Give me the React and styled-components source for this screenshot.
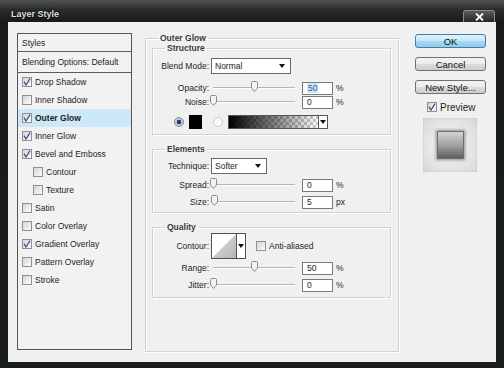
import React from "react";
import styled, { createGlobalStyle } from "styled-components";

const Global = createGlobalStyle`
  html, body {
    margin: 0;
    background: #1b201f;
  }
  body {
    font-family: "Liberation Sans", Arial, sans-serif;
    color: #1e1e1e;
  }
`;

const Window = styled.div`
  width: 504px;
  height: 368px;
  display: flex;
  flex-direction: column;
  background: linear-gradient(#4f5352 0, #2b2e2d 9px, #171a19 22px, #1a1f1e 100%);
`;

const TitleBar = styled.div`
  height: 22px;
  display: flex;
  align-items: flex-end;
  justify-content: space-between;
  padding: 0 9px 0 11px;
  flex-shrink: 0;
`;

const Title = styled.div`
  font-size: 9px;
  font-weight: bold;
  line-height: 14px;
  padding-bottom: 1px;
  color: #dcdcdc;
  text-shadow: 0 0 3px #000;
`;

const CloseBtn = styled.div`
  width: 32px;
  height: 12px;
  box-sizing: border-box;
  border: 1px solid #8c8c8c;
  border-bottom: none;
  border-radius: 3px 3px 0 0;
  background: linear-gradient(#5a5a5a, #262626);
  display: flex;
  align-items: center;
  justify-content: center;
`;

const Body = styled.div`
  margin: 0 8px;
  height: 340px;
  box-sizing: border-box;
  background: #f0f0f0;
  display: flex;
  align-items: flex-start;
  padding: 11px 0 0 9px;
`;

/* left style list */

const StyleList = styled.div`
  width: 115px;
  height: 317px;
  box-sizing: border-box;
  border: 1px solid #555;
  background: #f2f2f2;
  display: flex;
  flex-direction: column;
  flex-shrink: 0;
`;

const ListHead = styled.div`
  height: ${({ $h }) => $h}px;
  box-sizing: border-box;
  border-bottom: 1px solid #5c5c5c;
  display: flex;
  align-items: center;
  padding-left: 4px;
  font-size: 8.5px;
`;

const ListItem = styled.div`
  height: 18px;
  display: flex;
  align-items: center;
  padding-left: ${({ $sub }) => ($sub ? 15 : 4)}px;
  font-size: 8.5px;
  font-weight: ${({ $active }) => ($active ? "bold" : "normal")};
  background: ${({ $active }) => ($active ? "#cde8f6" : "transparent")};
`;

const Box = styled.span`
  width: 10px;
  height: 10px;
  box-sizing: border-box;
  border: 1px solid #8f9090;
  background: linear-gradient(135deg, #d6d6d6, #fbfbfb);
  display: inline-flex;
  align-items: center;
  justify-content: center;
  flex-shrink: 0;
  margin-right: 3px;
`;

const Check = ({ on }) => (
  <Box>
    {on && (
      <svg width="8" height="8" viewBox="0 0 8 8">
        <path d="M1 3.6 L3 7 L7 0.6" fill="none" stroke="#3f4588" strokeWidth="1.2" />
      </svg>
    )}
  </Box>
);

/* middle settings */

const Group = styled.fieldset`
  margin: 0;
  min-width: 0;
  box-sizing: border-box;
  border: 1px solid #d2d2d2;
  box-shadow: inset 1px 1px 0 #fff, 1px 1px 0 #fff;
  display: flex;
  flex-direction: column;
  padding: ${({ $pad }) => $pad};
`;

const Panel = styled(Group)`
  margin-left: 13px;
  width: 254px;
  height: 319px;
  gap: 9px;
  flex-shrink: 0;
`;

const Legend = styled.legend`
  margin-left: ${({ $indent }) => $indent}px;
  padding: 0 2px;
  font-size: 8.5px;
  line-height: 10px;
  font-weight: bold;
  color: #3b3b3b;
`;

const Row = styled.div`
  display: flex;
  align-items: center;
  height: ${({ $h }) => $h}px;
  margin-top: ${({ $mt }) => $mt}px;
  padding-left: ${({ $pl }) => $pl || 0}px;
  font-size: 8.5px;
`;

const Label = styled.span`
  width: 56px;
  text-align: right;
  flex-shrink: 0;
`;

const Select = styled.div`
  margin-left: 2px;
  width: ${({ $w }) => $w}px;
  height: 16px;
  box-sizing: border-box;
  border: 1px solid #6a6a6a;
  background: #fff;
  display: flex;
  align-items: center;
  justify-content: space-between;
  padding: 0 5px 0 3px;
`;

const Caret = styled.span`
  width: 0;
  height: 0;
  border-left: 3px solid transparent;
  border-right: 3px solid transparent;
  border-top: 4px solid #111;
`;

const Track = styled.div`
  position: relative;
  margin-left: 4px;
  width: 82px;
  height: 1px;
  background: #b5b5b5;
  border-bottom: 1px solid #fff;
`;

const ThumbWrap = styled.span`
  position: absolute;
  top: -6px;
  width: 7px;
  height: 11px;
  margin-left: -3.5px;
`;

const Slider = ({ value, max = 100 }) => (
  <Track>
    <ThumbWrap style={{ left: `${(value / max) * 100}%` }}>
      <svg width="7" height="11" viewBox="0 0 7 11">
        <path d="M0.5 1.5 Q0.5 0.5 1.5 0.5 H5.5 Q6.5 0.5 6.5 1.5 V7 L3.5 10.5 L0.5 7 Z" fill="#f3f3f3" stroke="#8c8c8c" />
      </svg>
    </ThumbWrap>
  </Track>
);

const NumBox = styled.div`
  margin-left: 7px;
  width: 31px;
  height: 13px;
  box-sizing: border-box;
  border: 1px solid #7a7a7a;
  background: #fff;
  display: flex;
  align-items: center;
  padding-left: 4px;
`;

const Selected = styled.span`
  background: #cfe4f7;
  color: #1f5ea8;
  padding: 0 1px;
`;

const Unit = styled.span`
  margin-left: 3px;
`;

const Radio = styled.span`
  width: 10px;
  height: 10px;
  box-sizing: border-box;
  border-radius: 50%;
  border: 1px solid ${({ $on }) => ($on ? "#7e8a99" : "#c8ccd2")};
  background: ${({ $on }) =>
    $on ? "radial-gradient(circle, #2c3b66 0 2px, #b9c2d0 2.5px, #eef0f3 100%)" : "#fbfbfb"};
  margin-left: ${({ $ml }) => $ml}px;
  flex-shrink: 0;
`;

const Swatch = styled.span`
  margin-left: 5px;
  width: 13px;
  height: 14px;
  background: #000;
`;

const GradientBar = styled.div`
  margin-left: 5px;
  width: 100px;
  height: 14px;
  box-sizing: border-box;
  border: 1px solid #555;
  display: flex;
`;

const GradientFill = styled.span`
  flex: 1;
  background: linear-gradient(to right, #000, rgba(0, 0, 0, 0)),
    repeating-conic-gradient(#c9c9c9 0 25%, #fff 0 50%) 0 0 / 6px 6px;
`;

const DropPart = styled.span`
  width: 8px;
  border-left: 1px solid #555;
  background: #fff;
  display: flex;
  align-items: center;
  justify-content: center;
`;

const ContourPick = styled.div`
  margin-left: 2px;
  width: 35px;
  height: 26px;
  box-sizing: border-box;
  border: 1px solid #505050;
  background: #fff;
  display: flex;
`;

const ContourArt = styled.span`
  flex: 1;
  display: flex;
`;

const AntiAlias = styled.span`
  margin-left: 10px;
  display: flex;
  align-items: center;
`;

/* right actions */

const Actions = styled.div`
  margin-left: 16px;
  margin-top: 1px;
  width: 71px;
  display: flex;
  flex-direction: column;
  flex-shrink: 0;
`;

const Button = styled.div`
  height: 14px;
  margin-top: ${({ $mt }) => $mt || 0}px;
  box-sizing: border-box;
  border: 1px solid ${({ $primary }) => ($primary ? "#3c7fb1" : "#707070")};
  border-radius: 3px;
  background: ${({ $primary }) =>
    $primary
      ? "linear-gradient(#e3f3fc 0%, #c6e6f7 50%, #a9d9f2 51%, #8fcaea 100%)"
      : "linear-gradient(#f3f3f3 0%, #ebebeb 50%, #dcdcdc 51%, #cdcdcd 100%)"};
  display: flex;
  align-items: center;
  justify-content: center;
  font-size: 9.5px;
  color: #111;
`;

const PreviewRow = styled.div`
  margin-top: 8px;
  height: 10px;
  padding-left: 12px;
  display: flex;
  align-items: center;
  font-size: 10px;
`;

const PreviewBox = styled.div`
  margin: 6px 0 0 8px;
  width: 54px;
  height: 54px;
  background: radial-gradient(circle, #ececec 40%, #d7d7d7 100%);
  box-shadow: inset 0 0 2px rgba(0, 0, 0, 0.15);
  display: flex;
  align-items: center;
  justify-content: center;
`;

const PreviewSquare = styled.span`
  width: 27px;
  height: 28px;
  box-sizing: border-box;
  border: 1px solid #6d6d6d;
  background: linear-gradient(#d4d4d4, #9c9c9c 55%, #5e5e5e);
  box-shadow: 0 0 3px 1px rgba(0, 0, 0, 0.4);
`;

const styles = [
  { name: "Drop Shadow", on: true },
  { name: "Inner Shadow", on: false },
  { name: "Outer Glow", on: true, active: true },
  { name: "Inner Glow", on: true },
  { name: "Bevel and Emboss", on: true },
  { name: "Contour", on: false, sub: true },
  { name: "Texture", on: false, sub: true },
  { name: "Satin", on: false },
  { name: "Color Overlay", on: false },
  { name: "Gradient Overlay", on: true },
  { name: "Pattern Overlay", on: false },
  { name: "Stroke", on: false },
];

function App() {
  return (
    <Window>
      <Global />
      <TitleBar>
        <Title>Layer Style</Title>
        <CloseBtn>
          <svg width="9" height="8" viewBox="0 0 9 8">
            <path d="M1 0.5 L8 7.5 M8 0.5 L1 7.5" stroke="#fff" strokeWidth="1.8" />
          </svg>
        </CloseBtn>
      </TitleBar>
      <Body>
        <StyleList>
          <ListHead $h={18}>Styles</ListHead>
          <ListHead $h={21}>Blending Options: Default</ListHead>
          {styles.map((s) => (
            <ListItem key={s.name} $sub={s.sub} $active={s.active}>
              <Check on={s.on} />
              {s.name}
            </ListItem>
          ))}
        </StyleList>

        <Panel $pad="0 7px 0 6px">
          <Legend $indent={6}>Outer Glow</Legend>

          <Group $pad="0 0 5px">
            <Legend $indent={12}>Structure</Legend>
            <Row $h={16} $mt={5}>
              <Label>Blend Mode:</Label>
              <Select $w={80}>
                Normal
                <Caret />
              </Select>
            </Row>
            <Row $h={14} $mt={7}>
              <Label>Opacity:</Label>
              <Slider value={50} />
              <NumBox>
                <Selected>50</Selected>
              </NumBox>
              <Unit>%</Unit>
            </Row>
            <Row $h={14} $mt={0}>
              <Label>Noise:</Label>
              <Slider value={0} />
              <NumBox>0</NumBox>
              <Unit>%</Unit>
            </Row>
            <Row $h={14} $mt={6} $pl={21}>
              <Radio $on $ml={0} />
              <Swatch />
              <Radio $ml={11} />
              <GradientBar>
                <GradientFill />
                <DropPart>
                  <Caret />
                </DropPart>
              </GradientBar>
            </Row>
          </Group>

          <Group $pad="0 0 3px">
            <Legend $indent={12}>Elements</Legend>
            <Row $h={16} $mt={4}>
              <Label>Technique:</Label>
              <Select $w={56}>
                Softer
                <Caret />
              </Select>
            </Row>
            <Row $h={14} $mt={4}>
              <Label>Spread:</Label>
              <Slider value={0} />
              <NumBox>0</NumBox>
              <Unit>%</Unit>
            </Row>
            <Row $h={14} $mt={3}>
              <Label>Size:</Label>
              <Slider value={5} max={250} />
              <NumBox>5</NumBox>
              <Unit>px</Unit>
            </Row>
          </Group>

          <Group $pad="0 0 5px">
            <Legend $indent={12}>Quality</Legend>
            <Row $h={26} $mt={1}>
              <Label>Contour:</Label>
              <ContourPick>
                <ContourArt>
                  <svg width="24" height="24" viewBox="0 0 24 24">
                    <defs>
                      <linearGradient id="cg" x1="0" y1="0" x2="1" y2="1">
                        <stop offset="0" stopColor="#e2e2e2" />
                        <stop offset="1" stopColor="#b4b4b4" />
                      </linearGradient>
                    </defs>
                    <polygon points="0,24 24,0 24,24" fill="url(#cg)" />
                  </svg>
                </ContourArt>
                <DropPart>
                  <Caret />
                </DropPart>
              </ContourPick>
              <AntiAlias>
                <Check on={false} />
                Anti-aliased
              </AntiAlias>
            </Row>
            <Row $h={14} $mt={2}>
              <Label>Range:</Label>
              <Slider value={50} />
              <NumBox>50</NumBox>
              <Unit>%</Unit>
            </Row>
            <Row $h={14} $mt={3}>
              <Label>Jitter:</Label>
              <Slider value={0} />
              <NumBox>0</NumBox>
              <Unit>%</Unit>
            </Row>
          </Group>
        </Panel>

        <Actions>
          <Button $primary>OK</Button>
          <Button $mt={9}>Cancel</Button>
          <Button $mt={9}>New Style...</Button>
          <PreviewRow>
            <Check on />
            Preview
          </PreviewRow>
          <PreviewBox>
            <PreviewSquare />
          </PreviewBox>
        </Actions>
      </Body>
    </Window>
  );
}

export default App;
